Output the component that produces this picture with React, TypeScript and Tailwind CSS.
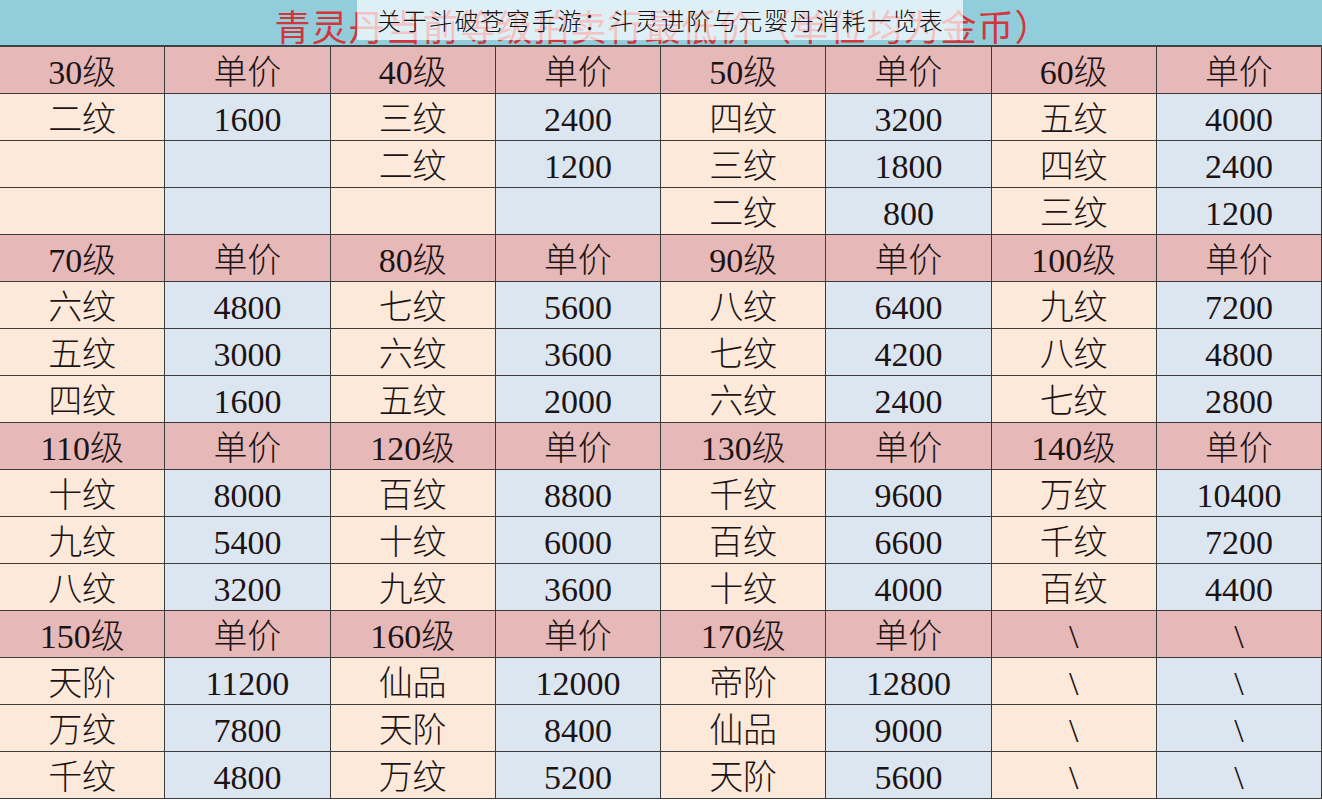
const BLOCKS: { levels: string[]; rows: string[][] }[] = [
  {
    levels: ["30级", "40级", "50级", "60级"],
    rows: [
      ["二纹", "1600", "三纹", "2400", "四纹", "3200", "五纹", "4000"],
      ["", "", "二纹", "1200", "三纹", "1800", "四纹", "2400"],
      ["", "", "", "", "二纹", "800", "三纹", "1200"],
    ],
  },
  {
    levels: ["70级", "80级", "90级", "100级"],
    rows: [
      ["六纹", "4800", "七纹", "5600", "八纹", "6400", "九纹", "7200"],
      ["五纹", "3000", "六纹", "3600", "七纹", "4200", "八纹", "4800"],
      ["四纹", "1600", "五纹", "2000", "六纹", "2400", "七纹", "2800"],
    ],
  },
  {
    levels: ["110级", "120级", "130级", "140级"],
    rows: [
      ["十纹", "8000", "百纹", "8800", "千纹", "9600", "万纹", "10400"],
      ["九纹", "5400", "十纹", "6000", "百纹", "6600", "千纹", "7200"],
      ["八纹", "3200", "九纹", "3600", "十纹", "4000", "百纹", "4400"],
    ],
  },
  {
    levels: ["150级", "160级", "170级", "\\"],
    rows: [
      ["天阶", "11200", "仙品", "12000", "帝阶", "12800", "\\", "\\"],
      ["万纹", "7800", "天阶", "8400", "仙品", "9000", "\\", "\\"],
      ["千纹", "4800", "万纹", "5200", "天阶", "5600", "\\", "\\"],
    ],
  },
];

const cellFont = { fontFamily: '"Liberation Serif", "Noto Sans CJK SC", serif' };

export default function App() {
  return (
    <div className="w-[1322px] h-[800px] overflow-hidden bg-white text-[#1c1414]" style={cellFont}>
      {/* ── Title ── */}
      <div className="relative h-[47px] bg-[#92cddc] border-b-2 border-[#3c4446] flex items-center justify-center overflow-hidden">
        <span className="text-[36px] tracking-[1px] text-[#d2353a] leading-none pl-[4px] pt-[12px]">
          青灵丹当前等级拍卖行最低价（单位均为金币）
        </span>
        <div className="absolute left-[357px] top-0 w-[606px] h-[40px] bg-white/70 flex items-center pl-[20px]">
          <span
            className="text-[24px] tracking-[1.8px] text-[#111] font-light leading-none"
            style={{ fontFamily: '"Noto Sans CJK SC", sans-serif' }}
          >
            关于斗破苍穹手游：斗灵进阶与元婴丹消耗一览表
          </span>
        </div>
      </div>

      {/* ── Table ── */}
      <div className="grid grid-cols-8">
        {BLOCKS.map((block, bi) => (
          <Block key={bi} levels={block.levels} rows={block.rows} />
        ))}
      </div>
    </div>
  );
}

function Block({ levels, rows }: { levels: string[]; rows: string[][] }) {
  const header = levels.flatMap((lv) => (lv === "\\" ? ["\\", "\\"] : [lv, "单价"]));
  return (
    <>
      {header.map((h, i) => (
        <div
          key={"h" + i}
          className="h-[47px] pt-[5px] bg-[#e6b8b7] border-r border-b border-[#3c3c3c] flex items-center justify-center text-[34px] font-light leading-none"
        >
          {h}
        </div>
      ))}
      {rows.map((row, ri) =>
        row.map((c, ci) => (
          <div
            key={ri + "-" + ci}
            className={
              "h-[47px] pt-[5px] border-r border-b border-[#3c3c3c] flex items-center justify-center text-[34px] font-light leading-none " +
              (ci % 2 === 0 ? "bg-[#fde9d9]" : "bg-[#dce6f1]")
            }
          >
            {c}
          </div>
        ))
      )}
    </>
  );
}
